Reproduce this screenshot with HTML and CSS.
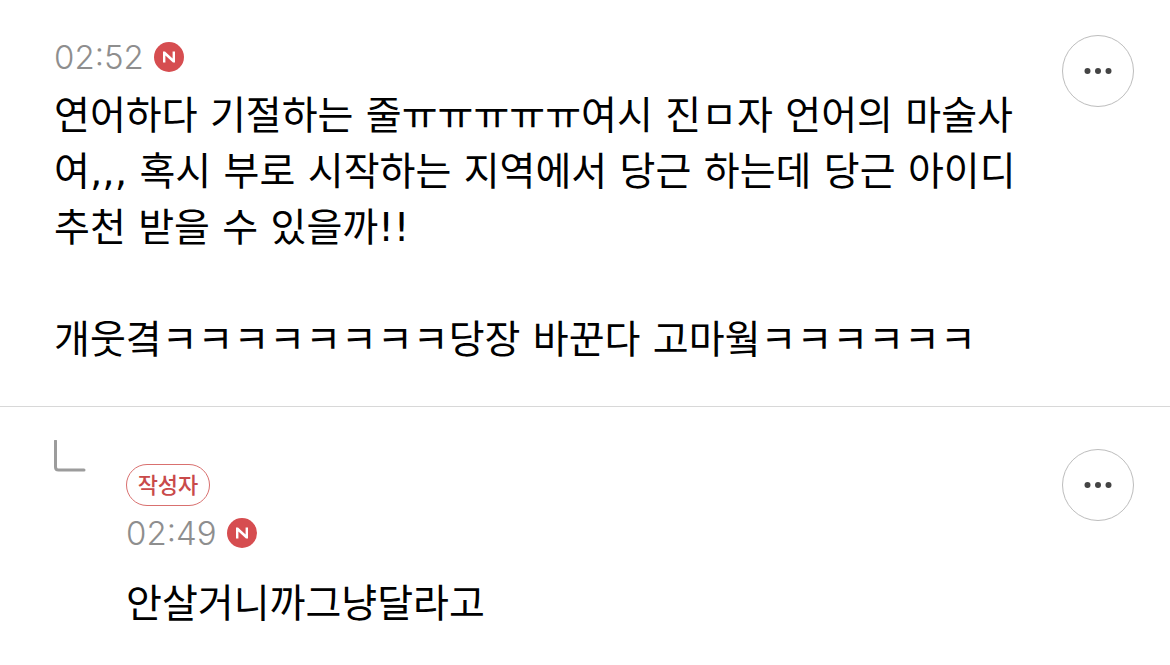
FILE: index.html
```html
<!DOCTYPE html>
<html lang="ko">
<head>
<meta charset="utf-8">
<meta name="viewport" content="width=device-width, initial-scale=1">
<title>댓글</title>
<link rel="stylesheet" href="styles.css">
</head>
<body>
<main class="comments">
  <article class="comment">
    <div class="body">
      <header class="meta">
        <time class="time">02:52</time>
        <svg class="new" viewBox="0 0 30 30" role="img" aria-label="새 댓글"><circle cx="15" cy="15" r="15" fill="#d64d50"/><path d="M9 20.500V9.500H11L18.600 16.500V9.500H21V20.500H19L11.400 13.500V20.500Z" fill="#fff"/></svg>
      </header>
      <p class="text">연어하다 기절하는 줄ㅠㅠㅠㅠㅠ여시 진ㅁ자 언어의 마술사<br>여,,, 혹시 부로 시작하는 지역에서 당근 하는데 당근 아이디<br>추천 받을 수 있을까!!<br><br>개웃곀ㅋㅋㅋㅋㅋㅋㅋㅋ당장 바꾼다 고마웤ㅋㅋㅋㅋㅋㅋ</p>
    </div>
    <button class="more" type="button" aria-label="더보기"><svg class="dots" viewBox="0 0 28 6"><circle cx="3.500" cy="3" r="3"/><circle cx="14" cy="3" r="3"/><circle cx="24.500" cy="3" r="3"/></svg></button>
  </article>
  <article class="comment reply">
    <svg class="branch" viewBox="0 0 32 32" aria-hidden="true"><path d="M1.500 1V27Q1.500 30 4.500 30H30" fill="none" stroke="#9c9c9c" stroke-width="3" stroke-linecap="round"/></svg>
    <div class="body">
      <span class="author">작성자</span>
      <header class="meta">
        <time class="time">02:49</time>
        <svg class="new" viewBox="0 0 30 30" role="img" aria-label="새 댓글"><circle cx="15" cy="15" r="15" fill="#d64d50"/><path d="M9 20.500V9.500H11L18.600 16.500V9.500H21V20.500H19L11.400 13.500V20.500Z" fill="#fff"/></svg>
      </header>
      <p class="text">안살거니까그냥달라고</p>
    </div>
    <button class="more" type="button" aria-label="더보기"><svg class="dots" viewBox="0 0 28 6"><circle cx="3.500" cy="3" r="3"/><circle cx="14" cy="3" r="3"/><circle cx="24.500" cy="3" r="3"/></svg></button>
  </article>
</main>
</body>
</html>
```
FILE: styles.css
```css
* { box-sizing: border-box; }
body { margin: 0; background: #fff; color: #000; font-family: Inter, "Noto Sans CJK KR", sans-serif; }
.comment { display: flex; align-items: flex-start; padding: 35px 36px 38px 54px; }
.body { flex: 1; min-width: 0; }
.meta { display: flex; align-items: center; gap: 10px; height: 44px; }
.time { font-weight: 300; font-size: 33px; color: #8e8e8e; }
.new { width: 30px; height: 30px; }
.text { margin: 9px 0 0; font-family: "DejaVu Sans", "Noto Sans CJK KR", sans-serif; font-size: 39px; line-height: 56px; }
.more { display: flex; align-items: center; justify-content: center; flex: none; width: 72px; height: 72px; padding: 0; border: 1px solid #bdbdbd; border-radius: 50%; background: #fff; }
.dots { width: 28px; height: 6px; fill: #444; }
.reply { border-top: 1px solid #d8d8d8; padding-top: 42px; }
.branch { flex: none; width: 32px; height: 32px; margin: -9px 40px 0 0; }
.author { display: block; width: 84px; height: 42px; margin-top: 15px; border: 1px solid #d9706f; border-radius: 21px; color: #c94a4a; font-size: 22px; font-weight: 500; line-height: 40px; text-align: center; }
.reply .meta { margin-top: 5px; }
.reply .text { margin-top: 21px; }
```
